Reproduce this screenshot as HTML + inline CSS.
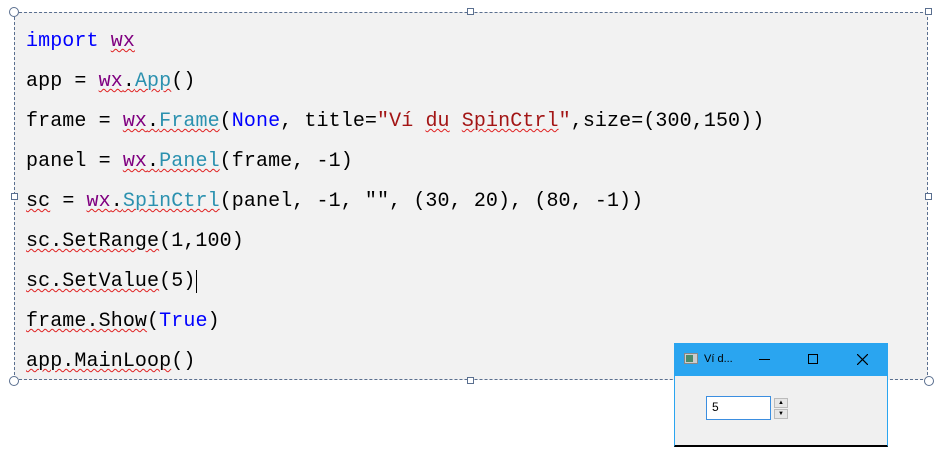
<!DOCTYPE html><html><head><style>
body{margin:0;width:934px;height:467px;background:#fff;position:relative;overflow:hidden}
.box{position:absolute;left:14px;top:12px;width:914px;height:368px;background:#f2f2f2;border:1px dashed #5a6f8f;box-sizing:border-box}
.code{position:absolute;left:26px;top:22px;font:20px/40px "Liberation Mono",monospace;color:#000;white-space:pre;letter-spacing:0.1px}
.k{color:#0000ff}.m{color:#800080}.c{color:#2b91af}.s{color:#a31515}
.w{text-decoration:underline wavy #e02020;text-decoration-thickness:1px;text-underline-offset:2px}
.h{position:absolute;width:7px;height:7px;border:1px solid #5a6f8f;background:#fff;box-sizing:border-box}
.hc{border-radius:50%;width:10px;height:10px}
.win{position:absolute;left:674px;top:343px;width:214px;height:104px;background:#f0f0f0;border:1px solid #2aa5f0;border-bottom:2px solid #000;box-sizing:border-box}
.tb{height:32px;background:#2aa5f0;position:relative;font:11px "Liberation Sans",sans-serif;color:#000}
</style></head><body>
<div class="box"></div>
<div class="h hc" style="left:9px;top:7px"></div>
<div class="h" style="left:467px;top:8px"></div>
<div class="h" style="left:925px;top:8px"></div>
<div class="h" style="left:11px;top:193px"></div>
<div class="h" style="left:925px;top:193px"></div>
<div class="h hc" style="left:9px;top:376px"></div>
<div class="h" style="left:467px;top:377px"></div>
<div class="h hc" style="left:924px;top:376px"></div>
<div class="code"><span class="k">import</span> <span class="m w">wx</span>
app = <span class="w"><span class="m">wx</span>.<span class="c">App</span></span>()
frame = <span class="w"><span class="m">wx</span>.<span class="c">Frame</span></span>(<span class="k">None</span>, title=<span class="s">"Ví <span class="w">du</span> <span class="w">SpinCtrl</span>"</span>,size=(300,150))
panel = <span class="w"><span class="m">wx</span>.<span class="c">Panel</span></span>(frame, -1)
<span class="w">sc</span> = <span class="w"><span class="m">wx</span>.<span class="c">SpinCtrl</span></span>(panel, -1, "", (30, 20), (80, -1))
<span class="w">sc.SetRange</span>(1,100)
<span class="w">sc.SetValue</span>(5)<span style="border-left:1px solid #000;margin-left:1px"></span>
<span class="w">frame.Show</span>(<span class="k">True</span>)
<span class="w">app.MainLoop</span>()</div>
<div class="win"><div class="tb">
<div style="position:absolute;left:9px;top:9px;width:14px;height:11px;background:#ccc;border:1px solid #888;box-sizing:border-box"><div style="margin:1px;width:7px;height:7px;background:#4a8a6a"></div></div>
<span style="position:absolute;left:29px;top:9px">Ví d...</span>
<div style="position:absolute;left:84px;top:15px;width:11px;height:1px;background:#000"></div>
<div style="position:absolute;left:133px;top:10px;width:10px;height:10px;border:1px solid #000;box-sizing:border-box"></div>
<svg style="position:absolute;left:182px;top:10px" width="11" height="11"><path d="M0 0L11 11M11 0L0 11" stroke="#000" stroke-width="1.2"/></svg>
</div>
<div style="position:absolute;left:31px;top:52px;width:65px;height:24px;background:#fff;border:1px solid #3b8ee0;box-sizing:border-box;font:12px 'Liberation Sans',sans-serif;padding:3px 0 0 5px">5</div>
<div style="position:absolute;left:99px;top:54px;width:14px;height:10px;background:#e6e6e6;border:1px solid #bbb;box-sizing:border-box;font-size:6px;text-align:center;line-height:8px">▲</div>
<div style="position:absolute;left:99px;top:65px;width:14px;height:10px;background:#e6e6e6;border:1px solid #bbb;box-sizing:border-box;font-size:6px;text-align:center;line-height:8px">▼</div>
</div>
</body></html>
